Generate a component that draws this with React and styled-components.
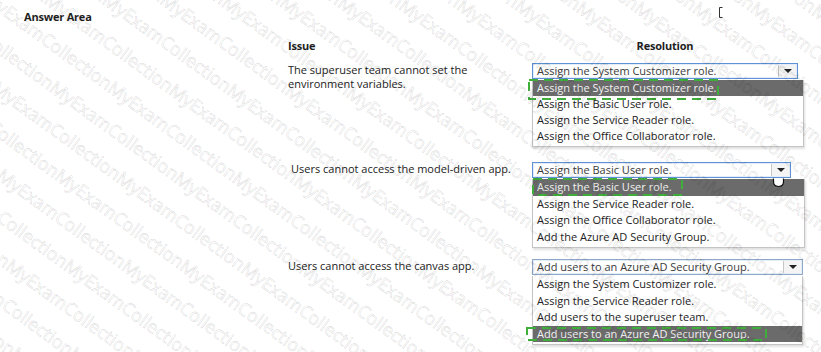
import React from "react";
import styled, { createGlobalStyle } from "styled-components";

const GlobalStyle = createGlobalStyle`
  html, body {
    margin: 0;
    padding: 0;
    background: #fff;
  }
  body {
    font-family: "Open Sans", "Noto Sans", sans-serif;
  }
`;

const Page = styled.div`
  position: relative;
  width: 821px;
  height: 352px;
  overflow: hidden;
  background: #fff;
  color: #1e1e1e;
  font-size: 11px;
`;

const Title = styled.div`
  padding: 10px 0 0 24px;
  font-weight: 700;
  line-height: 14px;
  letter-spacing: -0.2px;
`;

const Table = styled.div`
  display: flex;
  flex-direction: column;
  margin: 15px 0 0 288px;
`;

const Row = styled.div`
  display: grid;
  grid-template-columns: 244px 274px;
  margin-top: ${(p) => p.$gap || 0}px;
`;

const HeadCell = styled.div`
  font-weight: 700;
  line-height: 14px;
  letter-spacing: -0.2px;
  text-align: ${(p) => (p.$center ? "center" : "left")};
  padding-right: ${(p) => (p.$center ? 8 : 0)}px;
`;

const IssueText = styled.div`
  line-height: 14px;
  padding-left: ${(p) => p.$indent || 0}px;
  color: #222;
`;

const Resolution = styled.div`
  display: flex;
  flex-direction: column;
`;

const Select = styled.div`
  display: flex;
  width: ${(p) => p.$w}px;
  height: 16px;
  box-sizing: border-box;
  border: 1px solid ${(p) => (p.$focus ? "#5d92d6" : "#8fa8c8")};
  box-shadow: inset 0 0 0 1px #e3ecf7;
  background: #fff;
`;

const SelectValue = styled.span`
  flex: 1;
  padding-left: 4px;
  line-height: 14px;
  color: #3b3b3b;
  white-space: nowrap;
  overflow: hidden;
`;

const ArrowBox = styled.span`
  width: 17px;
  margin: 1px 1px 1px 0;
  border-left: 1px solid #c6c6c6;
  background: #f4f4f4;
  display: flex;
  align-items: center;
  justify-content: center;
`;

const Caret = styled.span`
  width: 0;
  height: 0;
  border-left: 4px solid transparent;
  border-right: 4px solid transparent;
  border-top: 4px solid #222;
`;

const Options = styled.ul`
  list-style: none;
  margin: 1px 0 0;
  padding: 0 0 2px;
  width: ${(p) => p.$w}px;
  box-sizing: border-box;
  border: 1px solid #c4c4c4;
  border-top: none;
  background: #fff;
  box-shadow: 1px 2px 2px rgba(0, 0, 0, 0.12);
`;

const Option = styled.li`
  position: relative;
  height: ${(p) => p.$h}px;
  line-height: ${(p) => p.$h}px;
  padding-left: 4px;
  white-space: nowrap;
  background: ${(p) => (p.$selected ? "#6b6b6b" : "transparent")};
  color: ${(p) => (p.$selected ? "#f2f2f2" : "#222")};
`;

const Mark = styled.svg`
  position: absolute;
  overflow: visible;
  pointer-events: none;
`;

const Watermark = styled.div`
  position: absolute;
  inset: 0;
  overflow: hidden;
  pointer-events: none;
`;

const WatermarkSheet = styled.div`
  position: absolute;
  left: 50%;
  top: 50%;
  width: 1800px;
  height: 1800px;
  transform: translate(-50%, -50%) rotate(36deg);
`;

const WatermarkLine = styled.div`
  white-space: nowrap;
  font-family: "Open Sans", sans-serif;
  font-size: 18px;
  line-height: 34px;
  color: rgba(0, 0, 0, 0.02);
  -webkit-text-stroke: 0.6px rgba(0, 0, 0, 0.15);
  margin-left: ${(p) => p.$shift}px;
`;

const Pointer = styled.svg`
  position: absolute;
  left: ${(p) => p.$x}px;
  top: ${(p) => p.$y}px;
  overflow: visible;
`;

const DashedBox = ({ x, y, w, h }) => (
  <Mark style={{ left: x, top: y }} width={w} height={h}>
    <rect
      x="1"
      y="1"
      width={w - 2}
      height={h - 2}
      fill="none"
      stroke="#3fae3a"
      strokeWidth="2"
      strokeDasharray="9 6"
    />
  </Mark>
);

const rows = [
  {
    gap: 10,
    issue: ["The superuser team cannot set the", "environment variables."],
    indent: 0,
    value: "Assign the System Customizer role.",
    selectW: 266,
    listW: 272,
    itemH: 16,
    focus: true,
    options: [
      "Assign the System Customizer role.",
      "Assign the Basic User role.",
      "Assign the Service Reader role.",
      "Assign the Office Collaborator role.",
    ],
    selected: 0,
    mark: { x: -5, y: -1, w: 191, h: 21 },
  },
  {
    gap: 15,
    issue: ["Users cannot access the model-driven app."],
    indent: 3,
    value: "Assign the Basic User role.",
    selectW: 259,
    listW: 273,
    itemH: 16.5,
    focus: true,
    options: [
      "Assign the Basic User role.",
      "Assign the Service Reader role.",
      "Assign the Office Collaborator role.",
      "Add the Azure AD Security Group.",
    ],
    selected: 0,
    mark: { x: -1, y: -1, w: 151, h: 18 },
  },
  {
    gap: 11,
    issue: ["Users cannot access the canvas app."],
    indent: 0,
    value: "Add users to an Azure AD Security Group.",
    selectW: 271,
    listW: 271,
    itemH: 16.5,
    focus: false,
    options: [
      "Assign the System Customizer role.",
      "Assign the Service Reader role.",
      "Add users to the superuser team.",
      "Add users to an Azure AD Security Group.",
    ],
    selected: 3,
    mark: { x: -7, y: 1, w: 241, h: 14 },
  },
];

const WORD = "MyExamCollection".repeat(14);

export default function App() {
  return (
    <Page>
      <GlobalStyle />
      <Title>Answer Area</Title>
      <Table>
        <Row>
          <HeadCell>Issue</HeadCell>
          <HeadCell $center>Resolution</HeadCell>
        </Row>
        {rows.map((r, i) => (
          <Row key={i} $gap={r.gap}>
            <IssueText $indent={r.indent}>
              {r.issue.map((line) => (
                <div key={line}>{line}</div>
              ))}
            </IssueText>
            <Resolution>
              <Select $w={r.selectW} $focus={r.focus}>
                <SelectValue>{r.value}</SelectValue>
                <ArrowBox>
                  <Caret />
                </ArrowBox>
              </Select>
              <Options $w={r.listW}>
                {r.options.map((o, j) => (
                  <Option key={o} $h={r.itemH} $selected={j === r.selected}>
                    {o}
                    {j === r.selected && <DashedBox {...r.mark} />}
                  </Option>
                ))}
              </Options>
            </Resolution>
          </Row>
        ))}
      </Table>

      <Pointer $x={718} $y={7} width="5" height="11">
        <path d="M4.5 0.5 H1.5 V10.5 H4.5" stroke="#333" strokeWidth="1" fill="none" />
      </Pointer>
      <Pointer $x={773} $y={178} width="11" height="9">
        <path d="M0.5 0.5 V3.5 Q0.5 8.5 5.5 8.5 Q10.5 8.5 10.5 3.5 V0.5" fill="#fff" stroke="#111" strokeWidth="1.2" />
      </Pointer>

      <Watermark>
        <WatermarkSheet>
          {Array.from({ length: 53 }, (_, i) => (
            <WatermarkLine key={i} $shift={-((i * 47) % 150)}>
              {WORD}
            </WatermarkLine>
          ))}
        </WatermarkSheet>
      </Watermark>
    </Page>
  );
}
